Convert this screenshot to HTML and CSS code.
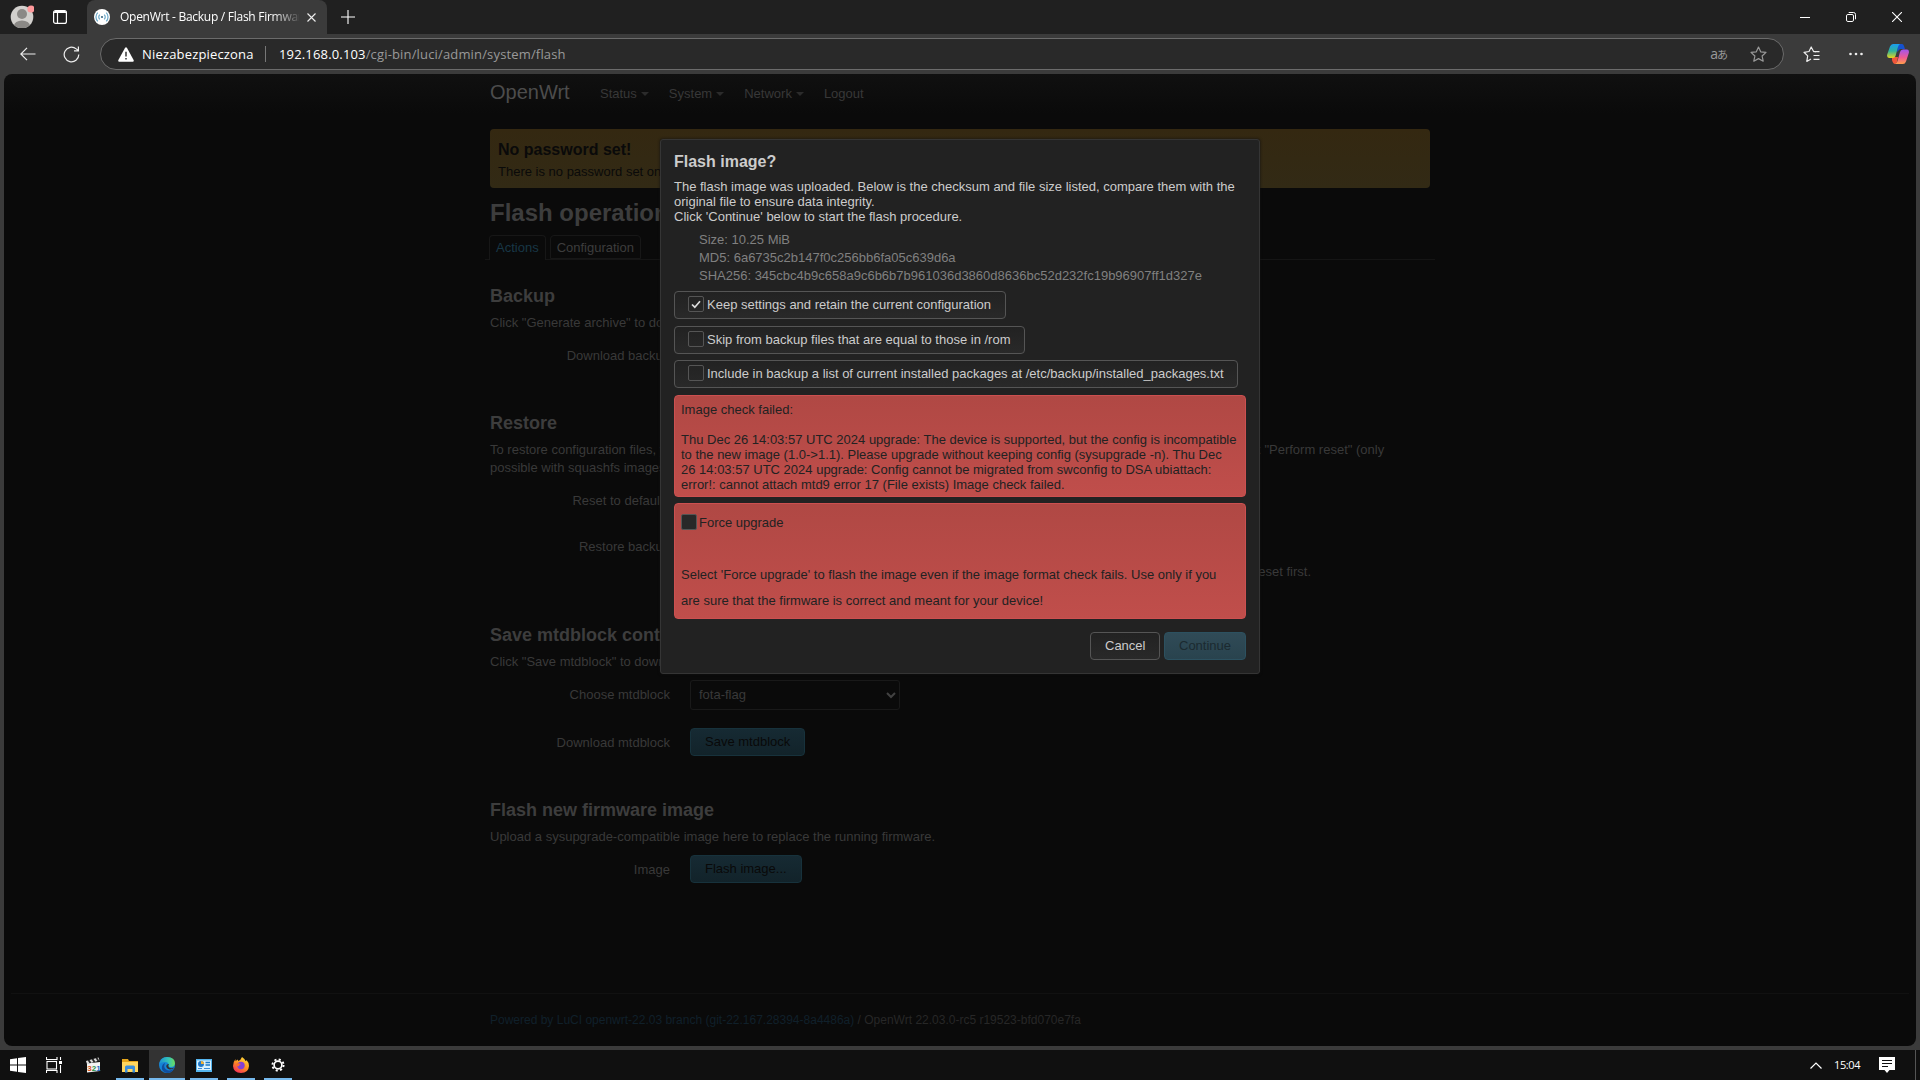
FILE: index.html
```html
<!DOCTYPE html>
<html lang="pl">
<head>
<meta charset="utf-8">
<title>OpenWrt - Backup / Flash Firmware</title>
<link rel="stylesheet" href="styles.css">
</head>
<body>
<header class="tabstrip">
  <svg class="avatar" width="24" height="26" viewBox="0 0 24 26"><defs><clipPath id="face"><circle cx="12" cy="15" r="11.3"/></clipPath></defs><circle cx="12" cy="15" r="11.3" fill="#d2d0cd"/><g fill="#8b8986" clip-path="url(#face)"><circle cx="12" cy="12" r="5"/><ellipse cx="12" cy="24" rx="8" ry="5.5"/></g><circle cx="21" cy="7" r="3.6" fill="#ff999b"/></svg>
  <svg class="workspace" width="14" height="14" viewBox="0 0 14 14" fill="none" stroke="#fff"><rect x=".6" y=".6" width="12.8" height="12.8" rx="2" stroke-width="1.2"/><path d="M1 2.5h12M4.5 3v10" stroke-width="1.2"/><path d="M1.5 1.8h11" stroke-width="1.6"/></svg>
  <div class="tab">
    <svg class="favicon" width="16" height="16" viewBox="0 0 16 16" fill="none"><circle cx="8" cy="8" r="8" fill="#fff"/><circle cx="8" cy="8" r="1.100" fill="#3b6b85"/><path d="M5.8 5.6a3.3 3.3 0 0 0 0 4.8M10.2 5.6a3.3 3.3 0 0 1 0 4.8M3.8 3.6a6.2 6.2 0 0 0 0 8.8M12.2 3.6a6.2 6.2 0 0 1 0 8.8" stroke="#6aa8c8" stroke-width="1.2"/></svg>
    <span class="tab-title">OpenWrt - Backup / Flash Firmware</span>
    <svg class="tab-close" width="9" height="9" viewBox="0 0 9 9" stroke="#eee" stroke-width="1.1"><path d="M.5.5l8 8M8.5.5l-8 8"/></svg>
  </div>
  <svg class="newtab" width="14" height="14" viewBox="0 0 14 14" stroke="#fff" stroke-width="1.1"><path d="M7 0v14M0 7h14"/></svg>
  <div class="winctl">
    <svg width="10" height="10" viewBox="0 0 10 10" stroke="#fff"><path d="M0 5.5h10"/></svg>
    <svg width="10" height="10" viewBox="0 0 10 10" stroke="#fff" fill="none"><rect x=".5" y="2.5" width="7" height="7" rx="1.4"/><path d="M2.7.5H7.500a2 2 0 0 1 2 2v4.800"/></svg>
    <svg width="10" height="10" viewBox="0 0 10 10" stroke="#fff" stroke-width="1.1"><path d="M0 0l10 10M10 0L0 10"/></svg>
  </div>
</header>
<div class="toolbar">
  <svg class="back" width="16" height="14" viewBox="0 0 16 14" fill="none" stroke="#eee" stroke-width="1.2"><path d="M15.500 7H1M7 .8L.8 7 7 13.200"/></svg>
  <svg class="reload" width="17" height="17" viewBox="0 0 17 17" fill="none" stroke="#eee" stroke-width="1.2"><path d="M15.800 8.500A7.300 7.300 0 1 1 13.200 2.900L15.300 4.600M15.400.6v4.300H11"/></svg>
  <div class="address">
    <svg class="warn" width="16" height="15" viewBox="0 0 16 15"><path d="M7.100.8Q8-.4 8.900.8l6.700 12.100Q16.200 14.700 14.800 14.700H1.200Q-.2 14.700.4 12.900z" fill="#fff"/><path d="M8 4.800v4.700M8 11v1.600" stroke="#292929" stroke-width="1.400"/></svg>
    <span class="unsafe">Niezabezpieczona</span><i class="sep"></i>
    <span class="url"><b>192.168.0.103</b>/cgi-bin/luci/admin/system/flash</span>
    <span class="translate">a<small>あ</small></span>
    <svg class="star" width="17" height="17" viewBox="0 0 17 17" fill="none" stroke="#999" stroke-width="1.200" stroke-linejoin="round"><path d="M8.500 1l2.200 4.800 5.300.6-3.900 3.600 1.100 5.200-4.700-2.600-4.700 2.600 1.100-5.200L1 6.400l5.300-.6z"/></svg>
  </div>
  <svg class="favs" width="17" height="17" viewBox="0 0 17 17" fill="none" stroke="#eee" stroke-width="1.200" stroke-linejoin="round"><path d="M13 5.800l-2.400-.3L8.200 1 6 5.500 1 6.300l3.700 3.600-.9 5.500L8 13M10.500 5.700h6M10.500 9.500h6M10.500 13.300h6"/></svg>
  <svg class="dots" width="14" height="4" viewBox="0 0 14 4" fill="#eee"><circle cx="1.500" cy="2" r="1.300"/><circle cx="7" cy="2" r="1.300"/><circle cx="12.500" cy="2" r="1.300"/></svg>
  <svg class="copilot" width="22" height="20" viewBox="0 0 22 20"><defs><linearGradient id="c1" x2="0" y2="1"><stop stop-color="#1a9df0"/><stop offset=".5" stop-color="#30b39a"/><stop offset="1" stop-color="#e6d51e"/></linearGradient><linearGradient id="c2" x2="0" y2="1"><stop stop-color="#a255ef"/><stop offset=".55" stop-color="#ef5a94"/><stop offset="1" stop-color="#ff9d4a"/></linearGradient></defs><path d="M11 0h4q1.500 0 2 2l1 3h-5L10 8z" fill="#1551cf"/><path d="M5 13l6 0-1 5q-.5 2-2 2-2 0-3-4z" fill="#f0563a"/><path d="M6 0h7q-1.500 1-2 3L8.500 12Q8 14 6 14H2Q-.5 14 .2 10.500L3 2.500Q4 0 6 0z" fill="url(#c1)"/><path d="M16 20H8q2-1 2.500-3L13 8q.6-2.500 3-2.500h4Q22.500 5.500 21.800 9L19 17.500Q18 20 16 20z" fill="url(#c2)"/></svg>
</div>
<div class="frame">
  <div class="viewport">
    <nav class="nav container"><span class="brand">OpenWrt</span><a class="drop">Status</a><a class="drop">System</a><a class="drop">Network</a><a>Logout</a></nav>
    <main class="container main">
      <section class="notice"><h4>No password set!</h4><p>There is no password set on this router. Please configure a root password to protect the web interface.</p></section>
      <h2>Flash operations</h2>
      <div class="tabs"><span class="on">Actions</span><span>Configuration</span></div>
      <h3 class="first">Backup</h3>
      <p class="desc">Click "Generate archive" to download a tar archive of the current configuration files.</p>
      <div class="row r-backup"><label>Download backup</label></div>
      <h3>Restore</h3>
      <p class="desc restore"><span>To restore configuration files, you can upload a previously generated backup archive here. To reset the firmware to its initial state, click "Perform reset" (only</span><br>possible with squashfs images).</p>
      <div class="row r-reset"><label>Reset to defaults</label></div>
      <div class="row r-restore"><label>Restore backup</label></div>
      <p class="hint">Custom files (certificates, scripts) may remain on the system. To prevent this, perform a factory-reset first.</p>
      <h3>Save mtdblock contents</h3>
      <p class="desc">Click "Save mtdblock" to download specified mtdblock file.</p>
      <div class="row r-choose"><label>Choose mtdblock</label><div class="select">fota-flag<svg width="10" height="7" viewBox="0 0 10 7" fill="none" stroke="#424242" stroke-width="2"><path d="M1 1l4 4 4-4"/></svg></div></div>
      <div class="row r-save"><label>Download mtdblock</label><button class="dim">Save mtdblock</button></div>
      <h3>Flash new firmware image</h3>
      <p class="desc">Upload a sysupgrade-compatible image here to replace the running firmware.</p>
      <div class="row r-image"><label>Image</label><button class="dim">Flash image...</button></div>
    </main>
    <footer><div class="container"><a>Powered by LuCI openwrt-22.03 branch (git-22.167.28394-8a4486a)</a> / OpenWrt 22.03.0-rc5 r19523-bfd070e7fa</div></footer>
  </div>
  <div class="modal">
    <h4>Flash image?</h4>
    <p>The flash image was uploaded. Below is the checksum and file size listed, compare them with the<br>original file to ensure data integrity.<br>Click 'Continue' below to start the flash procedure.</p>
    <ul><li>Size: 10.25 MiB</li><li>MD5: 6a6735c2b147f0c256bb6fa05c639d6a</li><li>SHA256: 345cbc4b9c658a9c6b6b7b961036d3860d8636bc52d232fc19b96907ff1d327e</li></ul>
    <div class="options">
      <label class="opt o1"><i class="check"><svg width="10" height="9" viewBox="0 0 10 9" fill="none" stroke="#ddd" stroke-width="1.700"><path d="M1 4.500l2.800 2.700L9 1.300"/></svg></i>Keep settings and retain the current configuration</label>
      <label class="opt o2"><i class="check"></i>Skip from backup files that are equal to those in /rom</label>
      <label class="opt o3"><i class="check"></i>Include in backup a list of current installed packages at /etc/backup/installed_packages.txt</label>
    </div>
    <div class="danger log">Image check failed:<br><br>Thu Dec 26 14:03:57 UTC 2024 upgrade: The device is supported, but the config is incompatible<br>to the new image (1.0-&gt;1.1). Please upgrade without keeping config (sysupgrade -n). Thu Dec<br>26 14:03:57 UTC 2024 upgrade: Config cannot be migrated from swconfig to DSA ubiattach:<br>error!: cannot attach mtd9 error 17 (File exists) Image check failed.</div>
    <div class="danger force"><label><i class="check"></i>Force upgrade</label><p>Select 'Force upgrade' to flash the image even if the image format check fails. Use only if you<br>are sure that the firmware is correct and meant for your device!</p></div>
    <div class="actions"><button class="cancel">Cancel</button><button class="continue">Continue</button></div>
  </div>
</div>
<div class="taskbar">
  <div class="task start"><svg width="16" height="16" viewBox="0 0 16 16" fill="#fff"><path d="M0 2.300l7-1v6.300H0zM8 1.100L16 0v7.600H8zM0 8.500h7v6.300l-7-1zM8 8.500h8V16l-8-1.100z"/></svg></div>
  <div class="task view"><svg width="16" height="16" viewBox="0 0 16 16" fill="none" stroke="#fff" stroke-width="1.100"><rect x="1" y="4.500" width="9.500" height="7.500"/><path d="M.5 0v2.500H11V0M.5 16v-2.500H11V16M14.500 0v3M14.500 8v8"/><path d="M13 5.500h3" stroke-width="3"/></svg></div>
  <div class="task player"><svg width="15" height="16" viewBox="0 0 15 16"><path d="M0 4L12.500.5l1 3L1 7z" fill="#ddd"/><path d="M2.500 3l2 3M6.500 2l2 3M10.500 1l2 3" stroke="#222" stroke-width="1.800"/><path d="M1 6.500l13-1.500v9l-13 1.500z" fill="#f3f3f3"/><text x="1.300" y="13.500" class="clip"><tspan fill="#e04f20">3</tspan><tspan fill="#289446">2</tspan><tspan fill="#2968c0">1</tspan></text></svg></div>
  <div class="task open w28 files"><svg width="16" height="15" viewBox="0 0 16 15"><path d="M0 1h6l1 2h9v11H0z" fill="#e5a51b"/><path d="M0 4h16v10H0z" fill="#ffd65e"/><path d="M3 14.500V9q0-1.500 1.500-1.500h7Q13 7.500 13 9v5.500h-2.500v-3.500h-5v3.500z" fill="#3b8eda"/></svg></div>
  <div class="task open active"><svg width="16" height="16" viewBox="0 0 16 16"><defs><linearGradient id="e1" x1="0" x2="1"><stop stop-color="#1b91d5"/><stop offset=".6" stop-color="#36c6b4"/><stop offset="1" stop-color="#6dde5b"/></linearGradient></defs><circle cx="8" cy="8" r="8" fill="#1684d5"/><path d="M.3 7Q1.500 0 8 0q8 .3 8 6.500Q15.500 10 12 10q-3 0-2.200-2Q9.500 5 6 5 2 5 .3 7z" fill="url(#e1)"/><path d="M6 6Q4 10 7 12.500q4 2.500 8-1-2 4.500-7 4.500Q3 15 2.800 11 3 7 6 6z" fill="#104e9e"/><path d="M10 7q-1.500 2-.2 3.200Q12 12 15 10.500l-.5 1Q9 14 7.300 10 7 7 10 7z" fill="#333"/></svg></div>
  <div class="task open w28"><svg width="16" height="13" viewBox="0 0 16 13"><rect width="16" height="13" fill="#54b5ef"/><rect x="1" y="1.500" width="14" height="9.500" fill="#d9f1ff"/><circle cx="5" cy="5" r="3" fill="#2177c9"/><path d="M5 5V2a3 3 0 0 1 3 3z" fill="#f0b137"/><path d="M9.500 3.500H14M9.500 6H14" stroke="#1877c8" stroke-width="1.500"/><path d="M2 9.500h4M8 9.500h6" stroke="#3b8eda"/></svg></div>
  <div class="task open w28"><svg width="16" height="16" viewBox="0 0 16 16"><defs><linearGradient id="f1" x1=".8" x2=".2" y2="1"><stop stop-color="#ffe13c"/><stop offset=".5" stop-color="#ff9021"/><stop offset="1" stop-color="#f5285d"/></linearGradient></defs><path d="M9 0q3 2 3.500 4 1 0 1-1Q16 5.500 16 9q-.5 7-8 7T0 9q0-4 2.500-7v2L5 2.500V4q3-1 4-4z" fill="url(#f1)"/><circle cx="8" cy="8.500" r="3.700" fill="#8440d5"/><path d="M3 7q2-1.500 5 0-2 .5-2 2Q4 10 3 7z" fill="#ff6d2c"/></svg></div>
  <div class="task open w28"><svg width="14" height="14" viewBox="0 0 14 14" fill="none" stroke="#fff"><circle cx="7" cy="7" r="3.900" stroke-width="1.700"/><circle cx="7" cy="7" r="5.600" stroke-width="1.900" stroke-dasharray="2.100 2.300"/></svg></div>
  <div class="tray"><svg width="12" height="7" viewBox="0 0 12 7" fill="none" stroke="#fff" stroke-width="1.200"><path d="M.5 6.500L6 1l5.500 5.500"/></svg><time>15:04</time><svg width="16" height="16" viewBox="0 0 16 16"><path d="M0 0h16v13h-5.500L8 16l-2.500-3H0z" fill="#fff"/><path d="M3 3.500h10M3 6.500h10M3 9.500h6" stroke="#101010"/></svg><i></i></div>
</div>
</body>
</html>
```
FILE: styles.css
```css
* { box-sizing: border-box; }
body { margin: 0; width: 1920px; height: 1080px; overflow: hidden; display: flex; flex-direction: column; background: #3b3b3b; font: 13px/18px "Liberation Sans", Arial, sans-serif; }
svg { display: block; flex: none; }
h2, h3, h4, p, ul { margin: 0; padding: 0; }

/* Browser tabs */
.tabstrip { height: 34px; flex: none; background: #202020; display: flex; align-items: center; font-family: "Open Sans", "Noto Sans", sans-serif; }
.avatar { margin: -4px 0 0 10px; }
.workspace { margin-left: 19px; }
.tab { height: 34px; width: 240px; margin-left: 20px; padding-left: 7px; background: #3b3b3b; border-radius: 8px 8px 0 0; display: flex; align-items: center; }
.tab-title { width: 179px; margin-left: 10px; font-size: 12px; letter-spacing: -.27px; color: #fff; white-space: nowrap; overflow: hidden; -webkit-mask-image: linear-gradient(90deg, #000 152px, transparent 182px); mask-image: linear-gradient(90deg, #000 152px, transparent 182px); }
.tab-close { margin-left: 8px; }
.newtab { margin-left: 14px; }
.winctl { display: flex; gap: 36px; margin-left: auto; margin-right: 18px; }

/* Address row */
.toolbar { height: 40px; flex: none; display: flex; align-items: center; font-family: "Open Sans", "Noto Sans", sans-serif; }
.back { margin-left: 20px; }
.reload { margin-left: 27px; }
.address { width: 1684px; height: 32px; margin-left: 20px; padding-left: 17px; border: 1px solid #6b6b6b; border-radius: 16px; background: #292929; display: flex; align-items: center; font-size: 13px; }
.unsafe { width: 116px; margin-left: 8px; color: #fff; letter-spacing: .17px; }
.sep { width: 1px; height: 16px; margin: 0 13px 0 7px; background: #777; }
.url { color: #999; white-space: nowrap; letter-spacing: .16px; }
.url b { color: #fff; font-weight: 400; }
.translate { margin-left: auto; color: #999; font-size: 14px; display: flex; align-items: center; }
.translate small { font: 11px/14px "Noto Sans CJK JP", sans-serif; margin-left: -1px; }
.star { margin: 0 16px 0 22px; }
.favs { margin-left: 19px; }
.dots { margin-left: 29px; }
.copilot { margin-left: 24px; }

/* Page */
.frame { height: 976px; flex: none; padding: 0 4px 4px; position: relative; }
.viewport { height: 972px; border-radius: 8px; background: linear-gradient(#101010, #0a0a0a 40px); overflow: hidden; color: #3d3d3d; display: flex; flex-direction: column; }
.container { width: 940px; margin: 0 auto; }
.nav { height: 40px; display: flex; align-items: center; padding-bottom: 2px; color: #383838; }
.brand { font-size: 20px; width: 110px; color: #4c4c4c; margin-top: -2px; }
.nav a { margin-right: 19px; display: flex; align-items: center; margin-top: 1px; }
.drop::after { content: ""; margin-left: 4px; border: 4px solid transparent; border-top-color: #2b2b2b; border-bottom: 0; margin-right: 1px; }
.main { display: flex; flex-direction: column; margin-top: 15px; }
.notice { height: 59px; padding: 12px 8px; background: linear-gradient(#342811, #322a15); border-radius: 4px; color: #0a0a0a; }
.notice h4 { font-size: 16px; line-height: 18px; }
.notice p { margin-top: 4px; white-space: nowrap; }
h2 { font-size: 24px; line-height: 36px; margin-top: 7px; }
.tabs { height: 29px; display: flex; gap: 4px; margin: 0 -5px; padding: 4px 4px 0; border-bottom: 1px solid #151515; }
.tabs span { border: 1px solid #171717; border-radius: 4px 4px 0 0; padding: 3px 6px; height: 24px; }
.tabs .on { color: #183746; height: 25px; border-bottom: 0; background: #0a0a0a; }
h3 { font-size: 18px; line-height: 36px; }
.main .first { margin-top: 18px; }
.desc { line-height: 18px; color: #393939; }
.restore span { white-space: nowrap; }
.row { display: flex; align-items: center; height: 30px; color: #393939; }
.row label { width: 180px; text-align: right; margin-right: 20px; }
.r-backup { margin: 9px 0 34px; }
.r-reset { margin-top: 9px; }
.r-restore { margin-top: 16px; }
.hint { margin: 1px 0 36px 200px; width: 621px; text-align: right; white-space: nowrap; color: #393939; }
.r-choose { margin-top: 9px; }
.r-save { margin: 17px 0 35px; }
.r-image { margin-top: 8px; }
.r-image label, .r-save label { padding-top: 1px; }
.select { width: 210px; height: 30px; padding: 0 3px 0 8px; border: 1px solid #191919; border-radius: 3px; display: flex; align-items: center; justify-content: space-between; color: #393939; }
button { font: 13px/18px "Liberation Sans", Arial, sans-serif; height: 28px; padding: 0 14px; border-radius: 4px; border: 1px solid #17323c; }
.dim { background: linear-gradient(#162a33, #12232a); color: #090909; }
footer { margin: auto 7px 0; height: 53px; border-top: 1px solid #111; padding-top: 17px; font-size: 12px; color: #272727; }
footer a { color: #10202a; }

/* Confirmation dialog */
.modal { position: absolute; left: 660px; top: 65px; width: 600px; height: 535px; padding: 13px; background: #222; border: 1px solid #353535; border-radius: 3px; color: #ccc; box-shadow: 0 0 3px #111; }
.modal h4 { font-size: 16px; line-height: 18px; }
.modal p { line-height: 15px; margin-top: 8px; white-space: nowrap; }
.modal ul { margin: 7px 0 6px 25px; list-style: none; color: #808080; }
.options { display: flex; flex-direction: column; align-items: flex-start; gap: 7px; }
.opt { height: 28px; padding: 0 14px 1px 13px; border: 1px solid #555; border-radius: 4px; display: flex; align-items: center; white-space: nowrap; background: linear-gradient(#222, #292929); }
.check { width: 16px; height: 16px; margin-right: 3px; border: 1px solid #555; border-radius: 2px; display: flex; align-items: center; justify-content: center; flex: none; }
.opt .check { margin-top: -1px; }
.o1 { width: 332px; } .o2 { width: 351px; } .o3 { width: 564px; margin-top: -1px; }
.danger { border: 1px solid #cc5050; border-radius: 4px; background: linear-gradient(#b04844, #c04e4b); color: #222; padding: 6px; line-height: 15px; white-space: nowrap; }
.log { height: 102px; margin-top: 7px; }
.force { height: 116px; margin-top: 6px; padding-top: 10px; }
.force label { display: flex; align-items: center; height: 16px; }
.force .check { background: #282828; border-color: #555; margin-right: 2px; }
.modal .force p { line-height: 26px; margin-top: 32px; }
.actions { display: flex; justify-content: flex-end; gap: 4px; margin-top: 13px; }
.cancel { width: 70px; background: linear-gradient(#222, #292929); border-color: #555; color: #ccc; }
.continue { width: 82px; background: linear-gradient(#304b57, #29434e); border-color: #2c5160; color: #1b2a30; }

/* Taskbar */
.taskbar { height: 30px; flex: none; display: flex; background: #101010; font-family: "Open Sans", "Noto Sans", sans-serif; }
.task { width: 39px; display: flex; align-items: center; justify-content: center; }
.start, .view { width: 36px; }
.player { padding-left: 3px; }
.clip { font: bold 8px "Liberation Sans", sans-serif; }
.task.open { border-bottom: 2px solid #76b9ed; padding-top: 2px; width: 36px; }
.task.open.w28 { width: 28px; margin: 0 4px 0 5px; }
.task.open.files { margin-right: 5px; }
.task.active { background: #333; }
.tray { margin-left: auto; display: flex; align-items: center; color: #fff; font-size: 11px; }
.tray time { width: 44px; padding-left: 12px; letter-spacing: -.4px; margin-right: 13px; }
.tray i { width: 1px; height: 30px; background: #555; margin: 0 4px 0 20px; }
```
